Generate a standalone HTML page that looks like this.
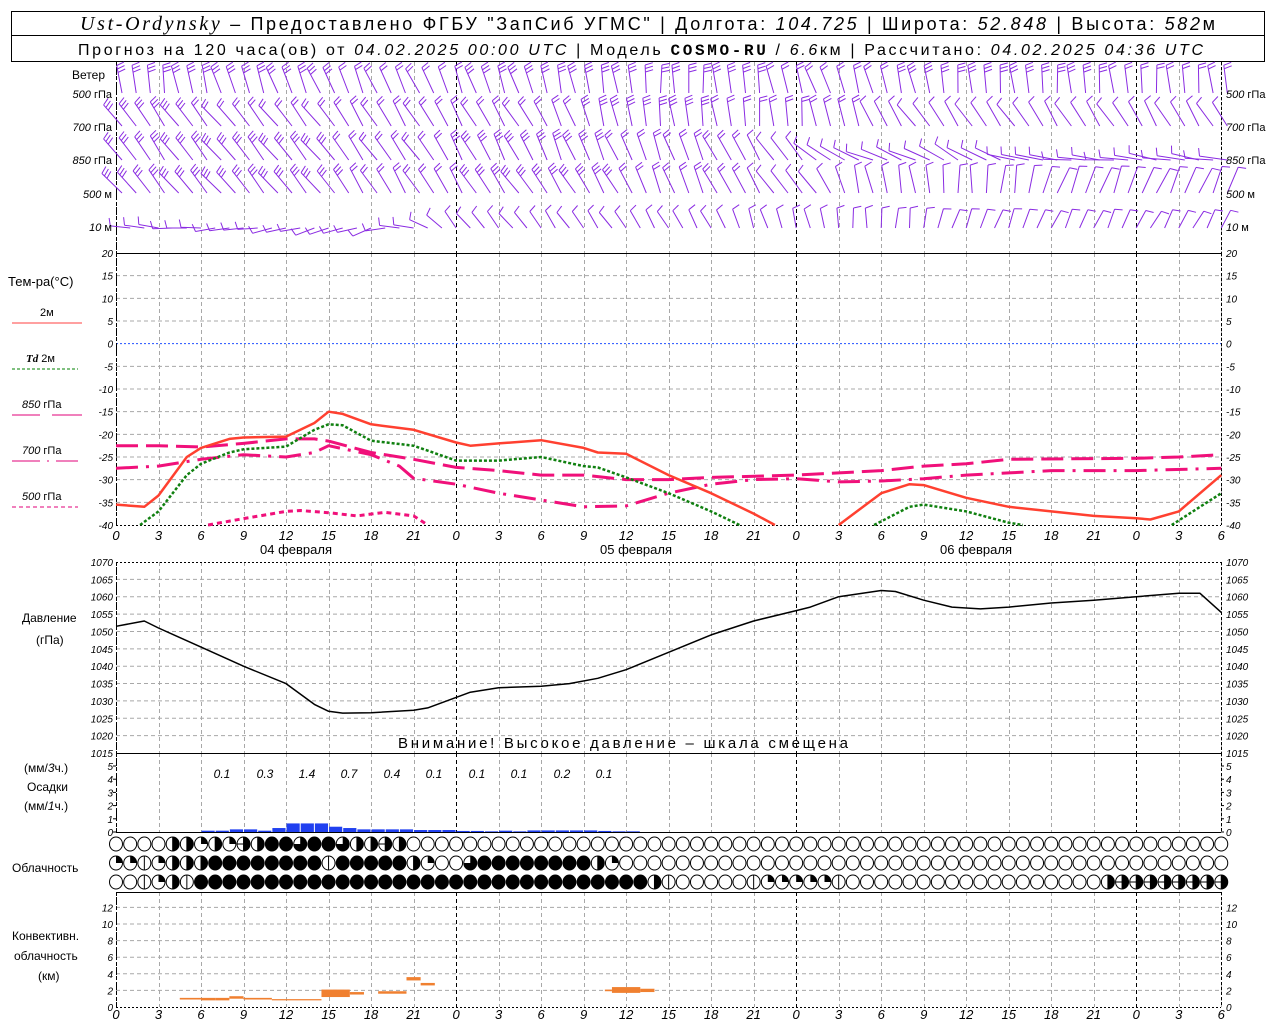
<!DOCTYPE html>
<html><head><meta charset="utf-8">
<style>
html,body{margin:0;padding:0;background:#fff;}
body{width:1280px;height:1024px;overflow:hidden;position:relative;font-family:"Liberation Sans",sans-serif;}
svg{position:absolute;left:0;top:0;}
text{font-family:"Liberation Sans",sans-serif;}
.it{font-family:"Liberation Sans",sans-serif;font-style:italic;}
.ser{font-family:"Liberation Serif",serif;font-style:italic;}
.tk{font-size:10px;font-style:italic;}
</style></head><body>
<svg id="s" width="1280" height="1024" viewBox="0 0 1280 1024" xmlns="http://www.w3.org/2000/svg">
<rect x="11.5" y="11.5" width="1253" height="50" fill="none" stroke="#000"/>
<line x1="11" y1="35.5" x2="1265" y2="35.5" stroke="#000"/>
<text x="80" y="30" font-size="18" fill="#000" textLength="1135" lengthAdjust="spacing"><tspan class="ser" font-size="20">Ust-Ordynsky</tspan> – Предоставлено ФГБУ "ЗапСиб УГМС" | Долгота: <tspan class="it">104.725</tspan> | Широта: <tspan class="it">52.848</tspan> | Высота: <tspan class="it">582</tspan>м</text>
<text x="78" y="55" font-size="16" fill="#000" textLength="1125" lengthAdjust="spacing">Прогноз на 120 часа(ов) от <tspan class="it">04.02.2025 00:00 UTC</tspan> | Модель <tspan font-family="Liberation Mono" font-weight="bold">COSMO-RU</tspan> / <tspan class="it">6.6</tspan>км | Рассчитано: <tspan class="it">04.02.2025 04:36 UTC</tspan></text>
<g id="grid"></g>
<g id="data"></g>
<g font-size="11" fill="#000">
<text x="72" y="79" font-size="12">Ветер</text>
<text x="112" y="98" text-anchor="end"><tspan class="it">500</tspan> гПа</text>
<text x="112" y="131" text-anchor="end"><tspan class="it">700</tspan> гПа</text>
<text x="112" y="164" text-anchor="end"><tspan class="it">850</tspan> гПа</text>
<text x="112" y="198" text-anchor="end"><tspan class="it">500</tspan> м</text>
<text x="112" y="231" text-anchor="end"><tspan class="it">10</tspan>   м</text>
<text x="1226" y="98"><tspan class="it">500</tspan> гПа</text>
<text x="1226" y="131"><tspan class="it">700</tspan> гПа</text>
<text x="1226" y="164"><tspan class="it">850</tspan> гПа</text>
<text x="1226" y="198"><tspan class="it">500</tspan> м</text>
<text x="1226" y="231"><tspan class="it">10</tspan>   м</text>
</g>
<g font-size="12" fill="#000">
<text x="8" y="286" font-size="13">Тем-ра(°C)</text>
<text x="40" y="316" font-size="11">2м</text>
<text x="26" y="362" font-size="11"><tspan class="ser" font-weight="bold">Td</tspan>  2м</text>
<text x="22" y="408" font-size="11"><tspan class="it">850</tspan> гПа</text>
<text x="22" y="454" font-size="11"><tspan class="it">700</tspan> гПа</text>
<text x="22" y="500" font-size="11"><tspan class="it">500</tspan> гПа</text>
<text x="260" y="554" font-size="13">04 февраля</text>
<text x="600" y="554" font-size="13">05 февраля</text>
<text x="940" y="554" font-size="13">06 февраля</text>
<text x="22" y="622">Давление</text>
<text x="36" y="644">(гПа)</text>
<text x="398" y="748" font-size="15" textLength="450" lengthAdjust="spacing">Внимание! Высокое давление – шкала смещена</text>
<text x="24" y="772">(мм/<tspan class="it">3</tspan>ч.)</text>
<text x="27" y="791">Осадки</text>
<text x="24" y="810">(мм/<tspan class="it">1</tspan>ч.)</text>
<text x="12" y="872">Облачность</text>
<text x="12" y="940">Конвективн.</text>
<text x="14" y="960">облачность</text>
<text x="38" y="980">(км)</text>
</g>
<g stroke-width="1">
<line x1="12" y1="323" x2="82" y2="323" stroke="#ff4040"/>
<line x1="12" y1="369" x2="78" y2="369" stroke="#008000" stroke-dasharray="3,2"/>
<line x1="12" y1="415" x2="40" y2="415" stroke="#e0007a"/><line x1="52" y1="415" x2="82" y2="415" stroke="#e0007a"/>
<line x1="12" y1="461" x2="78" y2="461" stroke="#e0007a" stroke-dasharray="28,7,2,7"/>
<line x1="12" y1="507" x2="78" y2="507" stroke="#e0007a" stroke-dasharray="4,3"/>
</g>
<g id="txt" class="tk" fill="#000">
<text x="222" y="778" text-anchor="middle" font-size="12">0.1</text>
<text x="265" y="778" text-anchor="middle" font-size="12">0.3</text>
<text x="307" y="778" text-anchor="middle" font-size="12">1.4</text>
<text x="349" y="778" text-anchor="middle" font-size="12">0.7</text>
<text x="392" y="778" text-anchor="middle" font-size="12">0.4</text>
<text x="434" y="778" text-anchor="middle" font-size="12">0.1</text>
<text x="477" y="778" text-anchor="middle" font-size="12">0.1</text>
<text x="519" y="778" text-anchor="middle" font-size="12">0.1</text>
<text x="562" y="778" text-anchor="middle" font-size="12">0.2</text>
<text x="604" y="778" text-anchor="middle" font-size="12">0.1</text>
</g>
<g id="ticks" class="tk" fill="#000"></g>
</svg>
<script>
(function(){
var NS="http://www.w3.org/2000/svg";
var X0=116,PX=14.17,X1=1221;
function X(h){return X0+h*PX;}
var G=document.getElementById('grid'),D=document.getElementById('data'),T=document.getElementById('ticks');
function el(p,tag,a){var e=document.createElementNS(NS,tag);for(var k in a)e.setAttribute(k,a[k]);p.appendChild(e);return e;}
function ln(p,x1,y1,x2,y2,c,da,w){var a={x1:x1,y1:y1,x2:x2,y2:y2,stroke:c,'stroke-width':w||1};if(da)a['stroke-dasharray']=da;return el(p,'line',a);}
function tx(s,x,y,anc){var t=el(T,'text',{x:x,y:y,'text-anchor':anc||'start'});t.textContent=s;}
var panels=[[62,253],[253,525],[562,753],[753,832],[892,1007]];
panels.forEach(function(p){
 for(var h=0;h<=78;h+=3){var x=Math.round(X(h))+.5;
  var day=(h%24==0);
  ln(G,x,p[0],x,p[1],day?'#000':'#a8a8a8','4,3');}
});
for(var v=20;v>=-40;v-=5){var y=253+(20-v)*4.533;
 if(v!=20&&v!=-40)ln(G,X0,y,X1,y,v==0?'#2050ff':'#a8a8a8',v==0?'2,2':'4,3');
 tx(v,113,y+4,'end');tx(v,1226,y+4);}
ln(G,X0,253.5,X1,253.5,'#000');ln(G,X0,525.5,X1,525.5,'#000','2,2');
for(var h=0;h<=78;h+=3){var l=h%24;
 var t=el(T,'text',{x:X(h),y:540,'text-anchor':'middle','font-size':13});t.textContent=l;
 var t2=el(T,'text',{x:X(h),y:1019,'text-anchor':'middle','font-size':13});t2.textContent=l;}
for(var p=1070;p>=1015;p-=5){var y=562+(1070-p)*3.473;
 if(p!=1070&&p!=1015)ln(G,X0,y,X1,y,'#a8a8a8','4,3');
 tx(p,113,y+4,'end');tx(p,1226,y+4);}
ln(G,X0,562.5,X1,562.5,'#000','2,2');ln(G,X0,753.5,X1,753.5,'#000');
for(var i=0;i<=5;i++){var y=832-i*13.2;tx(i,113,y+4,'end');tx(i,1226,y+4);ln(G,X0-3,y,X0,y,'#000');ln(G,X1,y,X1+3,y,'#000');}
ln(G,X0,832.5,X1,832.5,'#000');
for(var i=0;i<=12;i+=2){var y=1007-i*8.3;if(i>0)ln(G,X0,y,X1,y,'#a8a8a8','4,3');tx(i,113,y+4,'end');tx(i,1226,y+4);}
ln(G,X0,892.5,X1,892.5,'#000');ln(G,X0,1007.5,X1,1007.5,'#000','2,2');
panels.forEach(function(p){ln(G,X0+.5,p[0],X0+.5,p[1],'#000','3,2');ln(G,X1+.5,p[0],X1+.5,p[1],'#000','3,2');});
function ty(v){return 253+(20-v)*4.533;}
function poly(pts,fy,c,w,da){var s=pts.map(function(q){return X(q[0]).toFixed(1)+','+fy(q[1]).toFixed(1);}).join(' ');var a={points:s,fill:'none',stroke:c,'stroke-width':w,'stroke-linejoin':'round'};if(da)a['stroke-dasharray']=da;el(D,'polyline',a);}
var M='#f0107a';
poly([[0,-22.5],[3,-22.5],[6,-22.8],[9,-22],[12,-21],[14,-21],[15,-21.5],[18,-24],[21,-25.5],[24,-27.3],[27,-28],[30,-29],[33,-29],[36,-30],[39,-30],[42,-29.5],[48,-29],[51,-28.5],[54,-28],[57,-27],[60,-26.5],[63,-25.5],[72,-25.3],[75,-25],[78,-24.5]],ty,M,3,'22,8');
poly([[0,-27.5],[3,-27],[6,-25.5],[9,-24.5],[12,-25],[14,-24],[15,-22.5],[18,-24.5],[20,-27],[21,-29.7],[24,-31],[27,-33],[30,-34.5],[33,-36],[36,-35.8],[39,-33],[42,-31],[45,-30],[48,-29.8],[51,-30.5],[54,-30.3],[57,-29.8],[60,-29],[63,-28.5],[66,-28],[72,-28],[78,-27.5]],ty,M,3,'22,8,3,8');
poly([[6.5,-40],[9,-38.6],[12,-37],[13,-36.8],[15,-37.3],[17,-38],[19,-37.2],[21,-38],[22,-40]],ty,M,3,'5,4');
poly([[0,-35.5],[2,-36],[3,-33.5],[5,-25],[6,-23],[8,-21],[9,-20.7],[12,-20.5],[14,-17.5],[15,-15],[16,-15.5],[18,-17.8],[21,-19],[24,-21.8],[25,-22.5],[27,-22],[30,-21.3],[33,-23],[34,-24],[36,-24.3],[39,-29],[42,-33],[45,-37.5],[46.5,-40]],ty,'#ff4030',2.5);
poly([[51,-40],[54,-33],[56,-31],[57,-31.2],[60,-34],[63,-36],[66,-37],[69,-38],[72,-38.5],[73,-38.8],[75,-37],[78,-29]],ty,'#ff4030',2.5);
poly([[1.7,-40],[3,-37],[5,-29],[6,-26.5],[8,-24],[9,-23.3],[12,-22.7],[14,-19],[15,-17.8],[16,-18],[18,-21.4],[21,-22.5],[24,-25.8],[27,-25.8],[30,-25],[33,-27],[34,-27.3],[36,-29.5],[39,-33],[42,-37],[44,-40]],ty,'#108010',2.5,'3,2');
poly([[53.5,-40],[56,-36],[57,-35.5],[60,-37],[63,-39.5],[64,-40]],ty,'#108010',2.5,'3,2');
poly([[74.5,-40],[78,-33]],ty,'#108010',2.5,'3,2');
function py(p){return 562+(1070-p)*3.473;}
poly([[0,1051.5],[2,1053],[3,1051],[6,1045.5],[9,1040],[12,1035],[14,1029],[15,1027],[16,1026.5],[18,1026.6],[21,1027.3],[22,1028],[24,1031],[25,1032.5],[27,1033.8],[30,1034.2],[32,1035],[34,1036.5],[36,1039],[39,1044],[42,1049],[45,1053],[48,1056],[49,1057],[51,1060],[54,1061.8],[55,1061.5],[57,1059],[59,1057],[61,1056.5],[63,1057],[66,1058.2],[69,1059],[72,1060],[75,1061],[76.5,1061],[78,1055.5]],py,'#000',1.5);
var pr=[[6,8,.1],[8,10,.2],[10,11,.1],[11,12,.3],[12,15,.65],[15,16,.4],[16,17,.3],[17,21,.2],[21,24,.15],[24,26,.08],[26,27,.05],[27,28,.1],[28,29,.05],[29,34,.12],[34,35,.08],[35,37,.05]];
pr.forEach(function(b){for(var h=b[0];h<b[1];h++){el(D,'rect',{x:X(h)+0.5,y:832-b[2]*13.2,width:PX-1,height:b[2]*13.2,fill:'#2040f0'});}});
function cy(v){return 1007-v*8.3;}
var cv=[[4.5,6,.9,1.1],[6,7,.8,1.1],[7,8,.8,1.1],[8,9,1,1.3],[9,11,.9,1.1],[11,14.5,.8,.95],[14.5,16.5,1.2,2.1],[16.5,17.5,1.5,1.8],[18.5,20.5,1.6,1.9],[20.5,21.5,3.2,3.6],[21.5,22.5,2.6,2.9],[34.5,35,1.9,2.1],[35,37,1.7,2.4],[37,38,1.8,2.2]];
cv.forEach(function(b){el(D,'rect',{x:X(b[0]),y:cy(b[3]),width:(b[1]-b[0])*PX,height:(b[3]-b[2])*8.3,fill:'#f08030'});});
function rep(c,n){var s='';for(var i=0;i<n;i++)s+=c;return s;}
var r1='000022121h244344322h2'; r1+=rep('0',79-r1.length);
var r2='11v1222'+rep('4',8)+'v'+rep('4',5)+'21003'+rep('4',8)+'21'; r2+=rep('0',79-r2.length);
var r3='00v12v'+rep('4',32)+'2v'+rep('0',5)+'v'+rep('1',5)+'v'; r3+=rep('0',70-r3.length)+'2'+rep('h',8);
var rows=[r1,r2,r3];
var ry=[844,863,882];
rows.forEach(function(r,ri){for(var h=0;h<=78;h++){var c=r.charAt(h)||'0';var cx=X(h),cyy=ry[ri],R=6.5;
 var g=el(D,'g',{});
 el(g,'ellipse',{cx:cx,cy:cyy,rx:R,ry:R+.5,fill:c=='4'?'#000':'#fff',stroke:'#000','stroke-width':1});
 if(c=='2'||c=='h'){el(g,'path',{d:'M'+cx+','+(cyy-R-.5)+' A'+R+','+(R+.5)+' 0 0 1 '+cx+','+(cyy+R+.5)+' Z',fill:'#000'});if(c=='h')ln(g,cx-R,cyy,cx+R,cyy,'#000');ln(g,cx,cyy-R,cx,cyy+R,'#000');}
 if(c=='1')el(g,'path',{d:'M'+cx+','+cyy+' L'+cx+','+(cyy-R-.5)+' A'+R+','+(R+.5)+' 0 0 1 '+(cx+R)+','+cyy+' Z',fill:'#000'});
 if(c=='3')el(g,'path',{d:'M'+cx+','+cyy+' L'+cx+','+(cyy-R-.5)+' A'+R+','+(R+.5)+' 0 1 1 '+(cx-R)+','+cyy+' Z',fill:'#000'});
 if(c=='v')ln(g,cx,cyy-R,cx,cyy+R,'#000');
}});
var P='#8a2be2';
function barb(x,y,th,n,len){var a=th*Math.PI/180;var dx=Math.sin(a),dy=-Math.cos(a);var tx_=x+dx*len,ty_=y+dy*len;
 var d='M'+x.toFixed(1)+','+y.toFixed(1)+'L'+tx_.toFixed(1)+','+ty_.toFixed(1);
 var fa=a+Math.PI*0.42;var fx=Math.sin(fa)*8,fy=-Math.cos(fa)*8;
 for(var i=0;i<n;i++){var bx=tx_-dx*i*3.5,by=ty_-dy*i*3.5;d+='M'+bx.toFixed(1)+','+by.toFixed(1)+'l'+(fx).toFixed(1)+','+(fy).toFixed(1);}
 el(D,'path',{d:d,stroke:P,'stroke-width':1,fill:'none'});}
function lerp(tab,h){for(var i=0;i<tab.length-1;i++){if(h<=tab[i+1][0]){var t=(h-tab[i][0])/(tab[i+1][0]-tab[i][0]);return [tab[i][1]+(tab[i+1][1]-tab[i][1])*t,Math.round(tab[i][2]+(tab[i+1][2]-tab[i][2])*t)];}}return [tab[tab.length-1][1],tab[tab.length-1][2]];}
var W=[
 {y:93,len:28,t:[[0,-5,3],[10,-20,3],[20,-25,2],[30,-15,3],[40,0,3],[50,-20,2],[60,-5,3],[78,-5,2]]},
 {y:126,len:28,t:[[0,-35,3],[10,-40,2],[20,-30,2],[30,-30,2],[35,-10,3],[48,-5,2],[56,-35,1],[78,-30,1]]},
 {y:160,len:28,t:[[0,-35,3],[10,-40,3],[20,-35,2],[28,-25,3],[40,-20,2],[48,-40,1],[52,-70,1],[60,-60,1],[66,-85,1],[78,-80,1]]},
 {y:193,len:28,t:[[0,-40,3],[12,-40,3],[20,-30,2],[30,-35,3],[40,-20,2],[48,-40,1],[52,-15,1],[60,0,1],[66,20,1],[78,25,1]]},
 {y:228,len:20,t:[[0,-80,1],[10,-100,1],[18,-110,1],[24,-40,1],[40,-30,1],[50,-10,1],[60,20,1],[78,30,1]]}];
W.forEach(function(r){for(var h=0;h<=78;h++){if(r.y==228&&h<1)continue;var v=lerp(r.t,h);var jitter=((h*37)%7-3)*2;barb(X(h)+(r.y==228?0:6),r.y,v[0]+jitter,v[1],r.len);}});
})();
</script>
</body></html>
